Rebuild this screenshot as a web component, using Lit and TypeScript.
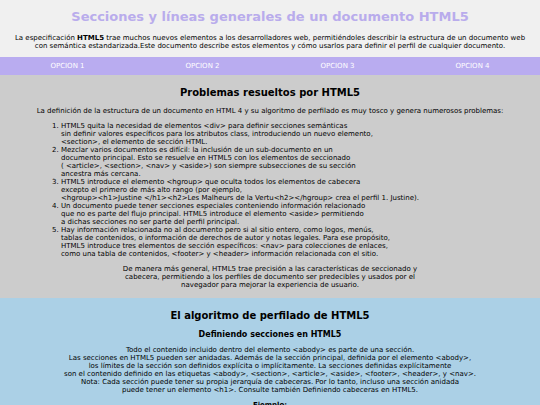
import { LitElement, html, css } from "lit";
import { customElement } from "lit/decorators.js";

const OPTIONS = ["OPCION 1", "OPCION 2", "OPCION 3", "OPCION 4"];

const PROBLEMS: string[][] = [
  [
    "HTML5 quita la necesidad de elementos <div> para definir secciones semánticas",
    "sin definir valores específicos para los atributos class, introduciendo un nuevo elemento,",
    "<section>, el elemento de sección HTML.",
  ],
  [
    "Mezclar varios documentos es difícil: la inclusión de un sub-documento en un",
    "documento principal. Esto se resuelve en HTML5 con los elementos de seccionado",
    "( <article>, <section>, <nav> y <aside>) son siempre subsecciones de su sección",
    "ancestra más cercana.",
  ],
  [
    "HTML5 introduce el elemento <hgroup> que oculta todos los elementos de cabecera",
    "excepto el primero de más alto rango (por ejemplo,",
    "<hgroup><h1>Justine </h1><h2>Les Malheurs de la Vertu<h2></hgroup> crea el perfil 1. Justine).",
  ],
  [
    "Un documento puede tener secciones especiales conteniendo información relacionado",
    "que no es parte del flujo principal. HTML5 introduce el elemento <aside> permitiendo",
    "a dichas secciones no ser parte del perfil principal.",
  ],
  [
    "Hay información relacionada no al documento pero si al sitio entero, como logos, menús,",
    "tablas de contenidos, o información de derechos de autor y notas legales. Para ese propósito,",
    "HTML5 introduce tres elementos de sección específicos: <nav> para colecciones de enlaces,",
    "como una tabla de contenidos, <footer> y <header> información relacionada con el sitio.",
  ],
];

const GENERAL = [
  "De manera más general, HTML5 trae precisión a las características de seccionado y",
  "cabecera, permitiendo a los perfiles de documento ser predecibles y usados por el",
  "navegador para mejorar la experiencia de usuario.",
];

const SECTIONS = [
  "Todo el contenido incluido dentro del elemento <abody> es parte de una sección.",
  "Las secciones en HTML5 pueden ser anidadas. Además de la sección principal, definida por el elemento <abody>,",
  "los límites de la sección son definidos explícita o implícitamente. La secciones definidas explícitamente",
  "son el contenido definido en las etiquetas <abody>, <section>, <article>, <aside>, <footer>, <header>, y <nav>.",
  "Nota: Cada sección puede tener su propia jerarquía de cabeceras. Por lo tanto, incluso una sección anidada",
  "puede tener un elemento <h1>. Consulte también Definiendo cabeceras en HTML5.",
];

const lines = (text: string[]) =>
  text.map((line, i) => (i ? html`<br />${line}` : line));

@customElement("app-root")
export class AppRoot extends LitElement {
  static styles = css`
    :host {
      display: block;
      min-height: 100vh;
      background: #abd0e6;
      color: #000;
      font: 7px/8px "DejaVu Sans", Verdana, sans-serif;
      text-align: center;
    }
    h1,
    h2,
    h3,
    h4,
    p,
    ol {
      margin: 0;
    }
    .header {
      padding: 9px 8px 7px;
      background: #f0f0f0;
    }
    .title {
      margin-bottom: 9px;
      color: #b9acec;
      font-size: 13px;
      line-height: 16px;
    }
    .nav {
      display: grid;
      grid-template-columns: repeat(4, 1fr);
      background: #b9acf0;
    }
    .option {
      padding: 5px 0;
      color: #fff;
      text-decoration: none;
    }
    .section {
      padding: 11px 16px 9px;
    }
    .problems {
      background: #ccc;
    }
    .heading {
      margin-bottom: 8px;
      font-size: 10px;
      line-height: 13px;
    }
    .subheading {
      margin-bottom: 7px;
      font-size: 8px;
      line-height: 9px;
    }
    .list {
      margin: 7px 0;
      padding: 0 0 0 45px;
      text-align: left;
    }
    .example {
      margin-top: 7px;
      font-size: 7px;
    }
  `;

  render() {
    return html`
      <header class="header">
        <h1 class="title">Secciones y líneas generales de un documento HTML5</h1>
        <p>
          La especificación <b>HTML5</b> trae muchos nuevos elementos a los
          desarrolladores web, permitiéndoles describir la estructura de un
          documento web<br />con semántica estandarizada.Este documento describe
          estos elementos y cómo usarlos para definir el perfil de cualquier
          documento.
        </p>
      </header>
      <nav class="nav">
        ${OPTIONS.map((o) => html`<a class="option" href="#">${o}</a>`)}
      </nav>
      <main>
        <section class="section problems">
          <h2 class="heading">Problemas resueltos por HTML5</h2>
          <p>
            La definición de la estructura de un documento en HTML 4 y su
            algoritmo de perfilado es muy tosco y genera numerosos problemas:
          </p>
          <ol class="list">
            ${PROBLEMS.map((p) => html`<li>${lines(p)}</li>`)}
          </ol>
          <p>${lines(GENERAL)}</p>
        </section>
        <section class="section">
          <h2 class="heading">El algoritmo de perfilado de HTML5</h2>
          <h3 class="subheading">Definiendo secciones en HTML5</h3>
          <p>${lines(SECTIONS)}</p>
          <h4 class="example">Ejemplo:</h4>
        </section>
      </main>
    `;
  }
}
